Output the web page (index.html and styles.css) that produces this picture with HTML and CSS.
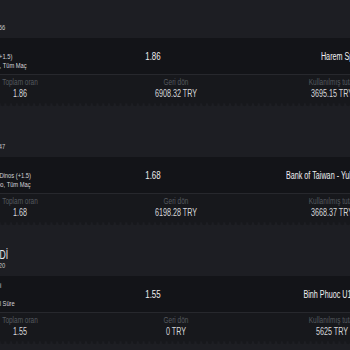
FILE: index.html
```html
<!DOCTYPE html>
<html lang="tr">
<head>
  <meta charset="UTF-8"/>
  <title>Bahis geçmişi</title>
  <meta name="viewport" content="width=device-width, initial-scale=1.0"/>
  <link rel="stylesheet" href="styles.css">
</head>
<body>
  <div class="page">

    <!-- kupon 1 -->
    <div class="coupon">
      <div class="coupon-head">
        <div class="status">KAZANDI</div>
        <div class="coupon-id">Bahis ID: 5821356</div>
      </div>
      <div class="bet">
        <div class="pick">
          <div class="league">Voleybol</div>
          <div class="selection">Galatasaray&nbsp; (+1.5)</div>
          <div class="market">Ev. Handikaps, Tüm Maç</div>
        </div>
        <div class="odds">1.86</div>
        <div class="match">Harem Spor - Galatasaray</div>
      </div>
      <div class="summary">
        <div class="stat"><span class="label">Toplam oran</span><span class="value">1.86</span></div>
        <div class="stat"><span class="label">Geri dön</span><span class="value">6908.32 TRY</span></div>
        <div class="stat"><span class="label">Kullanılmış tutar</span><span class="value">3695.15 TRY</span></div>
      </div>
      <div class="edge"></div>
    </div>

    <!-- kupon 2 -->
    <div class="coupon">
      <div class="coupon-head">
        <div class="status">KAZANDI</div>
        <div class="coupon-id">Bahis ID: 5821247</div>
      </div>
      <div class="bet">
        <div class="pick">
          <div class="league">Basketbol</div>
          <div class="selection">Yulon Luxgen Dinos (+1.5)</div>
          <div class="market">Handikap Turbo, Tüm Maç</div>
        </div>
        <div class="odds">1.68</div>
        <div class="match">Bank of Taiwan - Yulon Luxgen Dinos</div>
      </div>
      <div class="summary">
        <div class="stat"><span class="label">Toplam oran</span><span class="value">1.68</span></div>
        <div class="stat"><span class="label">Geri dön</span><span class="value">6198.28 TRY</span></div>
        <div class="stat"><span class="label">Kullanılmış tutar</span><span class="value">3668.37 TRY</span></div>
      </div>
      <div class="edge"></div>
    </div>

    <!-- kupon 3 -->
    <div class="coupon">
      <div class="coupon-head">
        <div class="status">KAYBEDİLDİ</div>
        <div class="coupon-id">Bahis ID: 5820920</div>
      </div>
      <div class="bet">
        <div class="pick">
          <div class="league">Ev sahibi galibi</div>
          <div class="selection">1</div>
          <div class="market">Sonuç, Normal Süre</div>
        </div>
        <div class="odds">1.55</div>
        <div class="match">Binh Phuoc U19 - Tay Ninh U19</div>
      </div>
      <div class="summary">
        <div class="stat"><span class="label">Toplam oran</span><span class="value">1.55</span></div>
        <div class="stat"><span class="label">Geri dön</span><span class="value">0 TRY</span></div>
        <div class="stat"><span class="label">Kullanılmış tutar</span><span class="value">5625 TRY</span></div>
      </div>
      <div class="edge"></div>
    </div>

  </div>
</body>
</html>
```

FILE: styles.css
```css
html, body {
  overflow: hidden;
}
body {
  margin: 0;
  background-color: #1d1e23;
  font-family: "Liberation Sans", Arial, sans-serif;
  color: #e4e4e6;
}
.page {
  width: 650px;
  margin: -10px 0 0 -58px;
  transform: scaleX(0.72);
  transform-origin: 0 0;
}
.coupon-head {
  height: 48px;
  box-sizing: border-box;
  padding: 21px 0 0 22px;
  background-color: #1d1e23;
}
.status {
  font-size: 12px;
  line-height: 12px;
  color: #e6e6e8;
}
.coupon-id {
  font-size: 8px;
  line-height: 9px;
  color: #c8c9cc;
}
.bet {
  display: grid;
  grid-template-columns: 232px 64px 1fr;
  align-items: center;
  height: 37px;
  box-sizing: border-box;
  padding: 0 7px 0 29px;
  background-color: #131418;
  border-bottom: 1px solid #27282d;
}
.pick {
  align-self: end;
  margin-bottom: 4px;
  font-size: 8px;
  line-height: 9px;
  color: #d4d5d8;
  white-space: nowrap;
}
.odds {
  text-align: center;
  font-size: 11px;
  color: #eeeeef;
}
.match {
  text-align: right;
  font-size: 10px;
  color: #f0f0f2;
  white-space: nowrap;
}
.summary {
  display: grid;
  grid-template-columns: repeat(3, 1fr);
  padding: 2px 0 3px;
  background-color: #17181c;
}
.stat {
  display: flex;
  flex-direction: column;
  align-items: center;
}
.label {
  font-size: 9px;
  line-height: 11px;
  color: #55585f;
}
.value {
  font-size: 10px;
  line-height: 12px;
  color: #d6d7da;
}
.edge {
  height: 6px;
  background: radial-gradient(circle at 4px 0, #17181c 3px, #1d1e23 3.6px) 0 0 / 8px 6px repeat-x;
}
```
